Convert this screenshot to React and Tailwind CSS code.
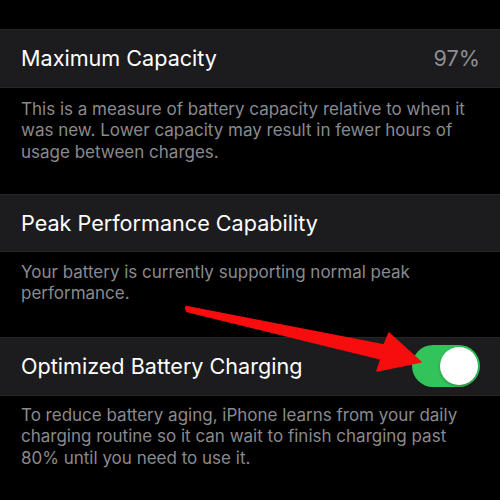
export default function App() {
  const font = { fontFamily: 'Inter, "Noto Sans", sans-serif' };
  return (
    <div className="relative w-[500px] h-[500px] bg-black overflow-hidden" style={font}>
      <div className="pt-[29px]">
        <div className="h-[59px] bg-[#1c1c1e] border-y border-[#262628] flex items-center justify-between pl-[21px] pr-[20px]">
          <span className="text-[21.6px] text-white">Maximum Capacity</span>
          <span className="text-[21.6px] text-[#8e8e93]">97%</span>
        </div>
        <p className="pl-[21px] pr-[20px] pt-[11px] pb-[31px] text-[17px] leading-[21.3px] text-[#8a8a8e]">
          This is a measure of battery capacity relative to when it was new. Lower capacity may result in fewer hours of usage between charges.
        </p>
        <div className="h-[58px] bg-[#1c1c1e] border-y border-[#262628] flex items-center pl-[21px] pr-[20px]">
          <span className="text-[21.6px] text-white">Peak Performance Capability</span>
        </div>
        <p className="pl-[21px] pr-[20px] pt-[10px] pb-[32px] text-[17px] leading-[21.5px] text-[#8a8a8e]">
          Your battery is currently supporting normal peak performance.
        </p>
        <div className="h-[59px] bg-[#1c1c1e] border-y border-[#262628] flex items-center justify-between pl-[21px] pr-[20px]">
          <span className="text-[21.6px] text-white">Optimized Battery Charging</span>
          <div className="w-[68px] h-[42px] rounded-full bg-[#32c45a] flex items-center justify-end pr-[2px]">
            <div className="w-[38px] h-[38px] rounded-full bg-white shadow-[0_1px_3px_rgba(0,0,0,0.3)]" />
          </div>
        </div>
        <p className="pl-[21px] pr-[20px] pt-[9px] text-[17px] leading-[21.5px] text-[#8a8a8e]">
          To reduce battery aging, iPhone learns from your daily charging routine so it can wait to finish charging past 80% until you need to use it.
        </p>
      </div>
      <svg className="absolute left-0 top-0" width="500" height="500" viewBox="0 0 500 500">
        <path
          d="M186 306.5 Q185 309 187 311.5 L381 359 L377 371 L421 362 L389 333 L384 345 Z"
          fill="#f70d0d"
          stroke="#f70d0d"
          strokeWidth="1.5"
          strokeLinejoin="round"
        />
      </svg>
    </div>
  );
}
